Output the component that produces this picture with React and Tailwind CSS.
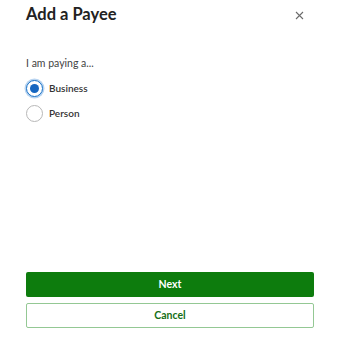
import React, { useState } from "react";

function Radio({ checked, label, onClick }) {
  return (
    <button
      type="button"
      onClick={onClick}
      className="flex items-center gap-[6px] h-[17px]"
    >
      <span
        className={
          "flex items-center justify-center w-[17px] h-[17px] rounded-full border bg-white " +
          (checked ? "border-[#1a73c8] border-[1.5px] shadow-[0_0_0_1.5px_#b9d4f0]" : "border-[#b7b7b7]")
        }
      >
        {checked && <span className="w-[9px] h-[9px] rounded-full bg-[#1666c0]" />}
      </span>
      <span className="text-[10px] font-semibold text-[#333]">{label}</span>
    </button>
  );
}

export default function App() {
  const [sel, setSel] = useState("Business");
  return (
    <div
      className="w-[340px] h-[340px] bg-white relative flex flex-col px-[26px]"
      style={{ fontFamily: 'Lato, "Open Sans", sans-serif' }}
    >
      <div className="flex items-center justify-between h-[28px] pt-[1px]">
        <h1 className="text-[16.5px] font-bold text-[#222]">Add a Payee</h1>
        <svg width="9" height="9" viewBox="0 0 9 9" className="mr-[10px] mt-[1px]">
          <path d="M1 1L8 8M8 1L1 8" stroke="#6b6b6b" strokeWidth="1.1" />
        </svg>
      </div>
      <p className="mt-[28px] text-[10.5px] text-[#444] leading-[14px]">I am paying a...</p>
      <div className="flex flex-col gap-[8px] mt-[10px]">
        <Radio checked={sel === "Business"} label="Business" onClick={() => setSel("Business")} />
        <Radio checked={sel === "Person"} label="Person" onClick={() => setSel("Person")} />
      </div>
      <div className="flex-1" />
      <div className="flex flex-col gap-[6px] mb-[12px]">
        <button className="h-[25px] rounded-[2px] bg-[#0d7c0d] text-white text-[10.5px] font-bold">Next</button>
        <button className="h-[25px] rounded-[2px] border border-[#94c894] bg-white text-[#166f16] text-[10.5px] font-bold">Cancel</button>
      </div>
    </div>
  );
}
